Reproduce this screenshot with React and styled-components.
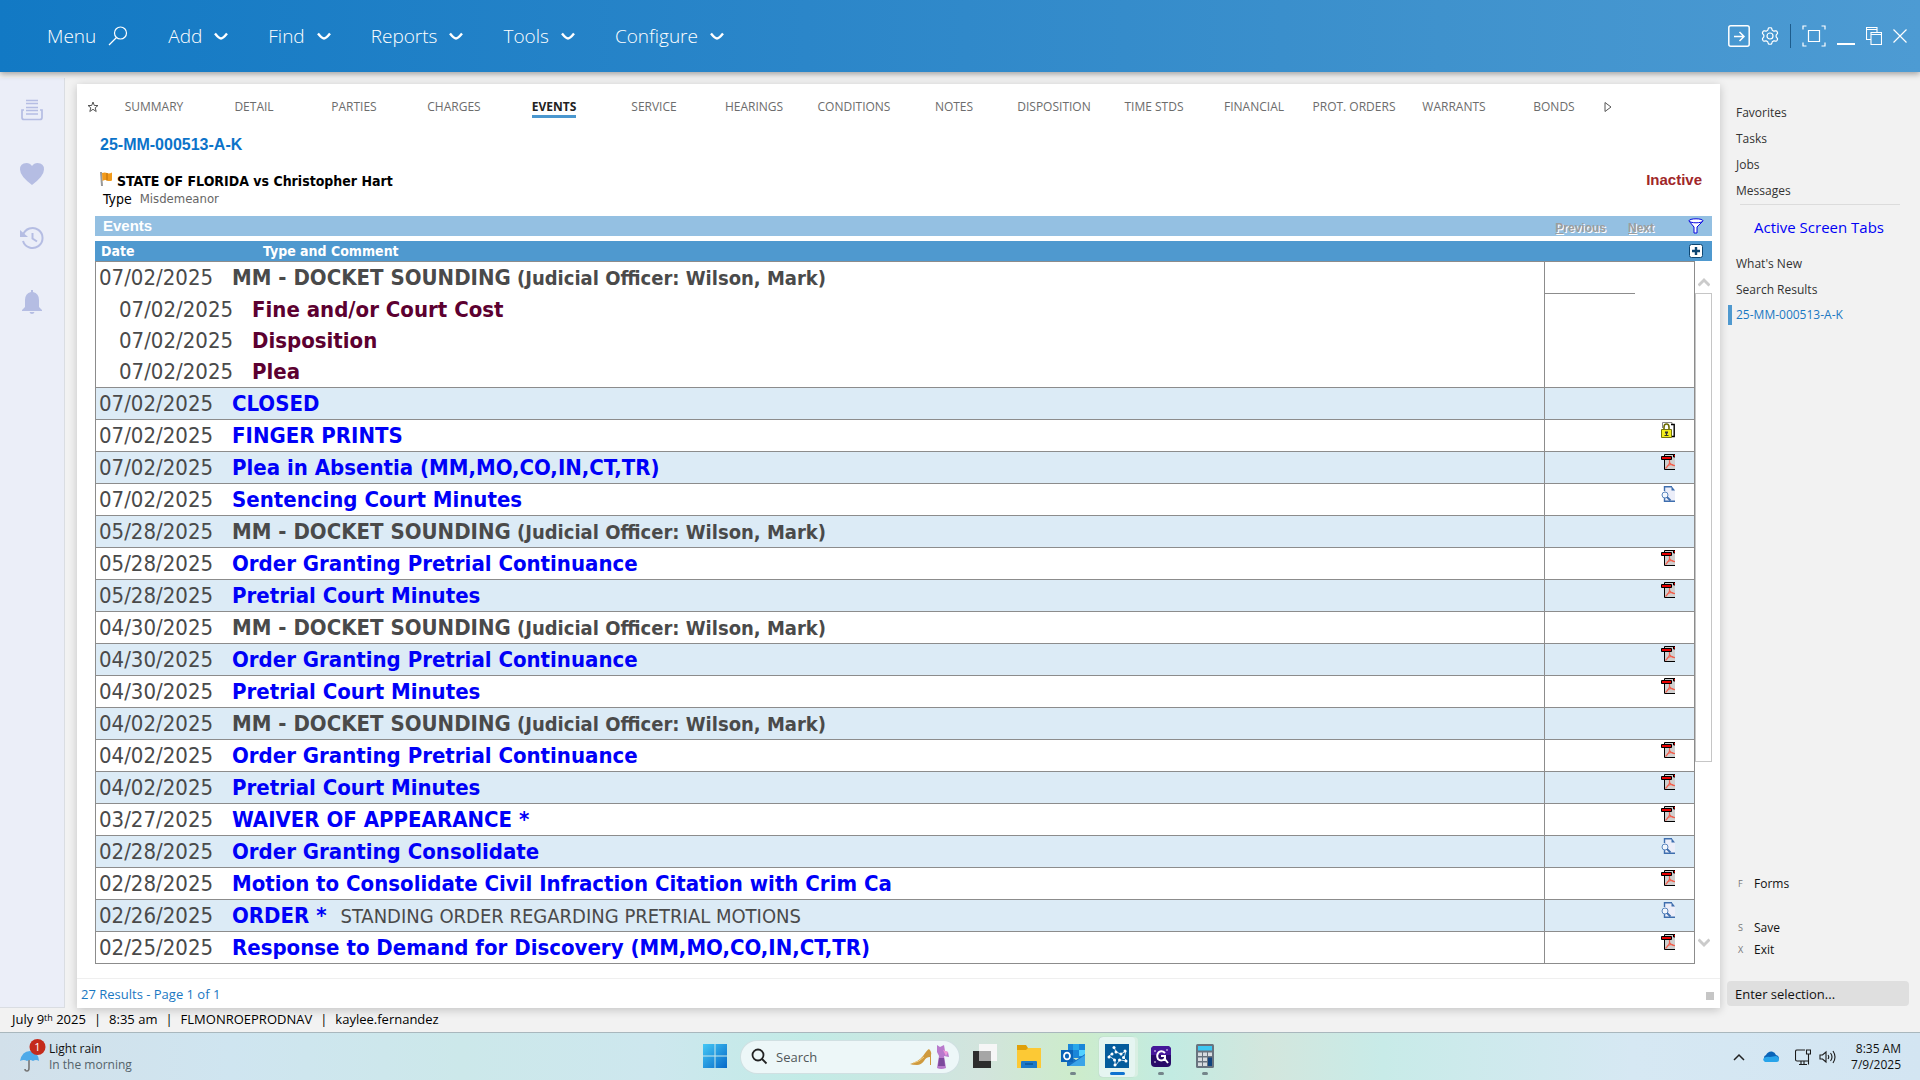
import React from "react";
import styled, { createGlobalStyle, css } from "styled-components";

const ui = `"Open Sans", "Noto Sans", sans-serif`;
const grid = `"DejaVu Sans Condensed", "DejaVu Sans", sans-serif`;
const arial = `"Liberation Sans", Arial, sans-serif`;

const Global = createGlobalStyle`
  * { box-sizing: border-box; }
  html, body, #root { height: 100%; }
  body { margin: 0; background: #f2f2f2; color: #111; font: 12px/16px ${ui}; overflow: hidden; }
  button { border: 0; padding: 0; background: none; color: inherit; font: inherit; cursor: pointer; }
  a { color: inherit; text-decoration: none; }
  svg { display: block; flex: none; }
`;

const Page = styled.div`
  height: 100vh;
  display: flex;
  flex-direction: column;
`;

const Header = styled.header`
  height: 72px;
  flex: none;
  display: flex;
  align-items: center;
  justify-content: space-between;
  padding: 0 13px 0 47px;
  color: #fff;
  background: linear-gradient(90deg, #1279c4 0%, #2b86c9 42%, #3f92cd 75%, #4d9bd3 100%);
  box-shadow: 0 2px 6px rgba(0, 0, 0, 0.35);
  z-index: 1;
`;
const Menu = styled.nav`
  display: flex;
  align-items: center;
  gap: 40px;
`;
const MenuButton = styled.button`
  display: flex;
  align-items: center;
  gap: 12px;
  font-size: 19px;
  line-height: 26px;
  font-weight: 300;
`;
const WindowTools = styled.div`
  display: flex;
  align-items: center;
  gap: 11px;
`;
const ToolDivider = styled.span`
  width: 1px;
  height: 24px;
  background: #1d5c8c;
`;

const Body = styled.div`
  flex: 1;
  min-height: 0;
  display: flex;
`;
const Rail = styled.nav`
  width: 65px;
  flex: none;
  margin-top: 6px;
  padding-top: 18px;
  display: flex;
  flex-direction: column;
  align-items: center;
  gap: 36px;
  background: #ebeef8;
  border: solid #dadde2;
  border-width: 0 1px 1px 0;
`;
const RailButton = styled.button`
  width: 28px;
  height: 28px;
  display: grid;
  place-items: center;
  color: #b5bde3;
`;

const Card = styled.main`
  flex: 1;
  min-width: 0;
  margin: 12px 0 0 12px;
  display: flex;
  flex-direction: column;
  background: #fff;
  box-shadow: 0 2px 9px rgba(0, 0, 0, 0.2);
`;
const Tabs = styled.nav`
  display: flex;
  align-items: center;
  height: 46px;
  padding-left: 10px;
`;
const TabIcon = styled.button`
  width: ${(p) => (p.$end ? "12px" : "17px")};
  display: grid;
  justify-content: start;
`;
const TabCell = styled.div`
  flex: 0 1 100px;
  display: flex;
  justify-content: center;
`;
const TabLink = styled.a`
  height: 21px;
  padding-top: 2px;
  color: #6c6c6c;
  font: 12px/16px ${ui};
  white-space: nowrap;
  ${(p) =>
    p.$active &&
    css`
      color: #222;
      font-weight: 700;
      border-bottom: 3px solid #4a97cf;
    `}
`;

const CaseHead = styled.section`
  padding: 6px 18px 0 23px;
`;
const CaseNumber = styled.h1`
  margin: 0;
  font: 700 16px/18px ${arial};
  color: #0b73c9;
`;
const CaseTitle = styled.div`
  display: flex;
  align-items: center;
  gap: 5px;
  margin-top: 16px;
  font: 700 14px/18px ${grid};
  color: #000;
`;
const CaseName = styled.span`
  flex: 1;
  padding-top: 2px;
`;
const CaseStatus = styled.span`
  font: 700 15px/18px ${arial};
  color: #a02729;
`;
const CaseType = styled.div`
  display: flex;
  gap: 8px;
  padding-left: 3px;
  font: 14px/18px ${grid};
  color: #000;
`;
const TypeValue = styled.span`
  font-size: 13px;
  color: #666;
`;

const Panel = styled.section`
  margin: 8px 8px 0 18px;
`;
const PanelBar = styled.div`
  height: 20px;
  display: flex;
  align-items: center;
  padding: 0 8px;
  background: #94c0e2;
  color: #fff;
`;
const PanelTitle = styled.h2`
  flex: 1;
  margin: 0;
  font: 700 15px/18px ${arial};
`;
const PageButton = styled.button`
  margin-right: 22px;
  padding-top: 3px;
  font: 700 12px/16px ${arial};
  color: #9d9d9d;
  text-shadow: 1px 1px 0 #fff;
`;
const FilterButton = styled.button`
  margin-left: 12px;
`;

const Scroller = styled.div`
  margin-top: 5px;
  display: grid;
  grid-template-columns: 1fr 17px;
`;
const Table = styled.table`
  width: 100%;
  border-collapse: separate;
  border-spacing: 0;
  table-layout: fixed;
`;
const DateHead = styled.th`
  width: 134px;
  height: 21px;
  padding: 0 6px;
  border-bottom: 1px solid #8c8c8c;
  background: #4f99cf;
  color: #fff;
  text-align: left;
  font: 700 14px/18px ${grid};
`;
const TypeHead = styled(DateHead)`
  width: auto;
  padding-left: 34px;
`;
const ToolHead = styled(DateHead)`
  width: 151px;
`;
const HeadCorner = styled.div`
  height: 20px;
  display: grid;
  place-items: center start;
  background: #4f99cf;
`;
const AddButton = styled.button`
  margin-left: -6px;
`;
const Row = styled.tr`
  background: ${(p) => (p.$shade ? "#dcebf6" : "#fff")};
`;
const Cell = styled.td`
  height: 32px;
  padding: 1px 3px 0;
  vertical-align: top;
  border-bottom: 1px solid #8c8c8c;
  font: 22px/30px ${grid};
  color: #4a4a4a;
  white-space: nowrap;
`;
const DateCell = styled(Cell)`
  border-left: 1px solid #8c8c8c;
`;
const DocCell = styled(Cell)`
  border: solid #8c8c8c;
  border-width: 0 1px 1px 1px;
  padding: 2px 19px 0 0;
`;
const DocButton = styled.button`
  display: block;
  margin-left: auto;
`;
const Line = styled.div`
  height: ${(p) => (p.$tall ? "31px" : "30px")};
  line-height: 30px;
`;
const SubLine = styled(Line)`
  height: 31px;
  padding-left: 20px;
  line-height: 32px;
`;
const EventLink = styled.a`
  font-weight: 700;
  color: ${(p) => p.$color};
`;
const Comment = styled.span`
  margin-left: 14px;
  font-size: 20px;
`;
const Officer = styled.span`
  font-size: 20px;
`;
const EmptyNote = styled.div`
  width: 90px;
  height: 30px;
  border-bottom: 1px solid #8c8c8c;
`;

const ScrollColumn = styled.div`
  display: flex;
  flex-direction: column;
`;
const ScrollTrack = styled.div`
  flex: 1;
  display: flex;
  flex-direction: column;
`;
const ScrollButton = styled.button`
  height: 32px;
  width: 17px;
  display: grid;
  place-items: center;
  padding-top: ${(p) => (p.$up ? "10px" : "0")};
  padding-bottom: ${(p) => (p.$up ? "0" : "10px")};
`;
const Thumb = styled.div`
  width: 17px;
  flex: 11;
  border: 1px solid #c6c6c6;
  background: #fff;
`;
const Spacer = styled.div`
  flex: 4;
`;

const CardFoot = styled.footer`
  margin-top: auto;
  height: 30px;
  display: flex;
  align-items: center;
  justify-content: space-between;
  padding: 0 6px 0 4px;
  border-top: 1px solid #efefef;
  font-size: 13px;
  line-height: 18px;
  color: #1a78c2;
`;
const Grip = styled.span`
  width: 8px;
  height: 8px;
  margin-top: 4px;
  background: #c6c6c6;
`;

const Side = styled.aside`
  width: 200px;
  flex: none;
  display: flex;
  flex-direction: column;
  padding: 28px 11px 2px 8px;
`;
const SideLink = styled.a`
  height: 26px;
  display: flex;
  align-items: center;
  padding-left: 4px;
  border-left: 4px solid ${(p) => (p.$active ? "#4f99cf" : "transparent")};
  color: ${(p) => (p.$active ? "#1a78c2" : "#333")};
  line-height: 18px;
`;
const ActiveLink = styled(SideLink)`
  height: 20px;
  margin-top: 2px;
`;
const SideRule = styled.hr`
  width: 160px;
  margin: 0 0 10px 12px;
  border: 0;
  border-top: 1px solid #dcdcdc;
`;
const SideTitle = styled.h2`
  margin: 0 0 12px 26px;
  font: 400 15px/24px ${ui};
  color: #0000f5;
`;
const Actions = styled.div`
  margin-top: auto;
  display: flex;
  flex-direction: column;
`;
const Action = styled.button`
  height: 22px;
  display: flex;
  align-items: center;
  padding-left: 10px;
  margin-bottom: ${(p) => (p.$apart ? "22px" : "0")};
  color: #111;
`;
const ActionKey = styled.span`
  width: 16px;
  text-align: left;
  font-size: 9px;
  color: #777;
`;
const Selection = styled.input`
  width: 182px;
  height: 25px;
  margin: 20px 0 0 -1px;
  padding: 0 8px;
  border: 0;
  border-radius: 4px;
  background: #dfdfdf;
  font: 13px/18px ${ui};
  &::placeholder { color: #111; opacity: 1; }
`;

const Status = styled.footer`
  height: 24px;
  flex: none;
  display: flex;
  align-items: center;
  padding: 0 12px 2px;
  font-size: 13px;
  line-height: 18px;
  color: #000;
`;
const StatusItem = styled.span`
  & + &::before { content: "|"; margin: 0 8px; }
  sup { font-size: 9px; line-height: 0; vertical-align: 3px; }
`;

const Taskbar = styled.footer`
  height: 48px;
  flex: none;
  display: grid;
  grid-template-columns: 1fr auto 1fr;
  align-items: center;
  border-top: 1px solid #a9b7bd;
  background: linear-gradient(90deg, #d2e0ea 0%, #cfe5f0 12%, #cce8ea 24%, #cde7ee 34%, #c2ebe6 42%, #d2e4dd 51%, #cdeccb 56%, #c2ebe2 61%, #d3e6dd 66%, #c8ebe8 72%, #d6e8f3 85%, #d3e5f2 100%);
`;
const Weather = styled.button`
  display: flex;
  align-items: center;
  gap: 1px;
  padding-left: 19px;
  text-align: left;
`;
const WeatherText = styled.span`
  color: ${(p) => (p.$dim ? "#54626a" : "#111")};
  display: block;
`;
const Apps = styled.div`
  display: flex;
  align-items: center;
  gap: 4px;
`;
const AppButton = styled.button`
  width: 40px;
  height: 44px;
  display: flex;
  flex-direction: column;
  align-items: center;
  padding-top: 9px;
  gap: 4px;
  border-radius: 4px;
  ${(p) =>
    p.$active &&
    css`
      height: 40px;
      padding-top: 7px;
      margin: 0 2px;
      width: 36px;
      background: #e5f5f1;
      box-shadow: 3px 0 0 #d9efe3, 0 0 1px #9ab;
    `}
`;
const RunMark = styled.span`
  width: ${(p) => (p.$active ? "15px" : "6px")};
  height: 3px;
  border-radius: 2px;
  background: ${(p) => (p.$active ? "#0f73d0" : "#74858a")};
`;
const Search = styled.label`
  width: 218px;
  height: 32px;
  margin: 0 2px;
  display: flex;
  align-items: center;
  padding: 0 10px;
  gap: 8px;
  border-radius: 16px;
  background: #edf7f8;
  box-shadow: 0 0 0 1px #d0e0e2;
`;
const SearchInput = styled.input`
  flex: 1;
  min-width: 0;
  border: 0;
  padding: 0;
  background: none;
  outline: 0;
  font: 13px/20px ${ui};
  &::placeholder { color: #51585a; opacity: 1; }
`;
const Tray = styled.div`
  display: flex;
  align-items: center;
  justify-content: flex-end;
  padding-right: 19px;
`;
const TrayButton = styled.button`
  margin-right: ${(p) => p.$gap};
`;
const Clock = styled.time`
  text-align: right;
  white-space: pre-line;
`;

/* ---- drawings ---- */
const Lens = () => (
  <svg width="20" height="20" viewBox="0 0 20 20" fill="none" stroke="#fff" strokeWidth="1.2">
    <circle cx="12.5" cy="7" r="6" /><path d="M8.500 11.500 1 19" />
  </svg>
);
const Chevron = () => (
  <svg width="14" height="9" viewBox="0 0 14 9" fill="none" stroke="#fff" strokeWidth="2.4"><path d="M1 1.500 Q5 6.500 7 6.500T13 1.500" /></svg>
);
const EnterIcon = () => (
  <svg width="22" height="22" viewBox="0 0 22 22" fill="none" stroke="#fff" strokeWidth="1.5"><rect x=".8" y=".8" width="20.4" height="20.4" rx="2" /><path d="M6 11.500h10M11.500 7l4.500 4.500-4.500 4.500" /></svg>
);
const gearPath = Array.from({ length: 96 }, (_, i) => {
  const a = (i / 96) * Math.PI * 2;
  const r = 7.2 + 1.1 * Math.tanh(2 * Math.cos(6 * a + Math.PI));
  return `${i ? "L" : "M"}${(9 + r * Math.cos(a)).toFixed(2)} ${(9 + r * Math.sin(a)).toFixed(2)}`;
}).join("") + "Z";
const Gear = () => (
  <svg width="18" height="18" viewBox="0 0 18 18" fill="none" stroke="#fff" strokeWidth="1.2"><path d={gearPath} /><circle cx="9" cy="9" r="3" /></svg>
);
const FitIcon = () => (
  <svg width="24" height="22" viewBox="0 0 24 22" fill="none" stroke="#fff" strokeWidth="1.2"><path d="M1 4.500V1h3.500M19.500 1H23v3.500M23 17.500V21h-3.500M4.500 21H1v-3.500M6.500 5.500h11v11h-11z" /></svg>
);
const MinIcon = () => (
  <svg width="18" height="18" viewBox="0 0 18 18"><path d="M0 16h18v2H0z" fill="#fff" /></svg>
);
const RestoreIcon = () => (
  <svg width="16" height="18" viewBox="0 0 16 18" fill="none" stroke="#fff" strokeWidth="1.1"><path d="M5 12.500H.5V.5h10.500v4.500M.5 2.500h10.500M5 5.500h10.500v12H5zM5 7.500h10.500" /></svg>
);
const CloseIcon = () => (
  <svg width="14" height="14" viewBox="0 0 14 14" stroke="#fff" strokeWidth="1.2"><path d="M.5.5l13 13M13.500.5l-13 13" /></svg>
);

const PressIcon = () => (
  <svg width="22" height="22" viewBox="0 0 22 22" fill="none" stroke="currentColor" strokeWidth="2"><path d="M5 1.500h12M5 4.500h12M5 8.500h12M5 11.500h12M5 15h12" strokeWidth="1.700" /><path d="M3 11H1v7.500q0 2 2 2h16q2 0 2-2V11h-2" strokeWidth="1.700" /></svg>
);
const HeartIcon = () => (
  <svg width="24" height="22" viewBox="0 0 24 22"><path d="M12 22Q0 13 0 6.500 0 0 6.500 0 10 0 12 3 14 0 17.500 0 24 0 24 6.500 24 13 12 22z" fill="currentColor" /></svg>
);
const HistoryIcon = () => (
  <svg width="24" height="24" viewBox="0 0 24 24" fill="none" stroke="currentColor" strokeWidth="2"><path d="M3 15a10 10 0 1 0 0-6M12.500 7v5.500l4.500 3" /><path d="M0 4v7h8z" fill="currentColor" stroke="none" /></svg>
);
const BellIcon = () => (
  <svg width="20" height="24" viewBox="0 0 20 24"><path d="M9 0h2v2q6 1.500 6 8v7l3 3v1H0v-1l3-3v-7q0-6.500 6-8zM7.500 22h5q-.5 2-2.500 2t-2.500-2z" fill="currentColor" /></svg>
);
const StarIcon = () => (
  <svg width="12" height="12" viewBox="0 0 12 12" fill="none" stroke="#555"><path d="M6 1l1.300 3.500H11L8.200 6.800l1 3.700L6 8.300 2.800 10.500l1-3.700L1 4.500h3.700z" /></svg>
);
const NextIcon = () => (
  <svg width="8" height="12" viewBox="0 0 8 12" fill="none" stroke="#555"><path d="M1 1.500v9L7 6z" /></svg>
);
const FlagIcon = () => (
  <svg width="12" height="16" viewBox="0 0 12 16"><path d="M0 0h2l1 14H1z" fill="#999" /><path d="M2 1q3-1 5 0t5-.5v8q-3 1-5 0t-4.500.5z" fill="#f29a1a" /><path d="M7 1v7.500" stroke="#b86a08" /></svg>
);
const FilterIcon = () => (
  <svg width="16" height="16" viewBox="0 0 16 16"><path d="M1 3l5 6v6h3V9l6-6z" fill="#fff" stroke="#0808e0" /><ellipse cx="8" cy="2.800" rx="7" ry="2" fill="#fff" stroke="#0808e0" /></svg>
);
const PlusIcon = () => (
  <svg width="14" height="14" viewBox="0 0 14 14"><rect x=".5" y=".5" width="13" height="13" rx="2" fill="#fff" stroke="#0d4672" /><path d="M7 3v8M3 7h8" stroke="#0d4672" strokeWidth="2.400" /></svg>
);
const ScrollArrow = ({ up }) => (
  <svg width="12" height="10" viewBox="0 0 12 10" fill="none" stroke="#cbcbcb" strokeWidth="3"><path d={up ? "M.5 8.500 6 3l5.500 5.500" : "M.5 1.500 6 7l5.500-5.500"} /></svg>
);
const PdfIcon = () => (
  <svg width="14" height="16" viewBox="0 0 14 16"><path d="M4 1h10v14H4z" fill="#cfcfcf" /><path d="M3.500 2V.5H14M3.500 5v10.500H14" stroke="#000" fill="none" /><path d="M.5 2.500h10v3H.5z" fill="#e80000" stroke="#000" /><path d="M12.500.5H15V3h-2.500z" fill="#e80000" stroke="#000" /><path d="M8.500 6v2.500q0 2-4 6M8.500 8.500q2 3.500 6.500 3M6 12q3-1.500 6-1.500" stroke="#f2604e" fill="none" strokeWidth="1.200" /></svg>
);
const ViewIcon = () => (
  <svg width="14" height="16" viewBox="0 0 14 16"><path d="M3 1h8l3 3v11H3z" fill="#eceef9" /><path d="M3.500 5V.8H11M3.500 12v3.200H14" stroke="#3e6eae" strokeWidth="1.400" fill="none" /><path d="M10.500 0l3.500 4.500h-3.500z" fill="#3e6eae" /><circle cx="4" cy="9" r="3" fill="#f2f7fd" stroke="#5c86bd" /><path d="M6 11l3.500 3.500" stroke="#3e6eae" strokeWidth="1.800" /></svg>
);
const LockIcon = () => (
  <svg width="14" height="16" viewBox="0 0 14 16"><path d="M1.500 6V.5H11v14H9" fill="#fff" stroke="#888" /><path d="M10 2.500h3.200v12H10" fill="#fff" stroke="#000" strokeWidth="1.400" /><path d="M3 8V5q0-3 2.500-3T8 5v3" fill="none" stroke="#6a6a00" strokeWidth="1.600" /><path d="M.5 7.500h10v8H.5z" fill="#f3ee1c" stroke="#77770a" /><path d="M4 9.500h3v2H6V13h1.500v1h-4v-1H5v-1.500H4z" fill="#333" /></svg>
);
const docIcons = { pdf: PdfIcon, view: ViewIcon, lock: LockIcon };

const UmbrellaIcon = () => (
  <svg width="29" height="36" viewBox="0 0 29 36"><path d="M10 14v15q0 3-2 3t-2-2" fill="none" stroke="#777" strokeWidth="1.600" /><path d="M1 22Q3 12 11 12t9 10q-3-2-6 0-3-2-6 0-3-2-7 0z" fill="#4faae9" /><circle cx="18.500" cy="8" r="8" fill="#c42b1c" /><text x="18.500" y="12" fontSize="11" textAnchor="middle" fill="#fff">1</text></svg>
);
const WindowsIcon = () => (
  <svg width="24" height="24" viewBox="0 0 24 24"><defs><linearGradient id="win" gradientUnits="userSpaceOnUse" x1="0" y1="0" x2="24" y2="24"><stop offset="0" stopColor="#45c8f5" /><stop offset="1" stopColor="#0669c9" /></linearGradient></defs><path d="M0 0h11.500v11.500H0zM12.500 0H24v11.500H12.500zM0 12.500h11.500V24H0zM12.500 12.500H24V24H12.500z" fill="url(#win)" /></svg>
);
const SearchLens = () => (
  <svg width="17" height="17" viewBox="0 0 17 17" fill="none" stroke="#222" strokeWidth="1.800"><circle cx="7" cy="7" r="5.500" /><path d="m11 11 4.500 4.500" /></svg>
);
const FashionIcon = () => (
  <svg width="40" height="26" viewBox="0 0 40 26"><path d="M1 20q8-2 13-8 4-6 6-7 3 3 2 6v10h-1v-8q-4 0-6 4-3 4-7 4-5 0-7-1z" fill="#cf9a3e" /><path d="M4 19q6-1 11-6" stroke="#f0cd84" fill="none" /><path d="M28 1l3 2 4-2 1 6 3 1 1 5-5-1 2 12q-5 2-9 0l2-12-2-4z" fill="#b879cc" /><path d="M30 14h5l1 8h-7z" fill="#7c4a9c" /><path d="M34 6l5 2-2 4z" fill="#f09ad8" /></svg>
);
const TaskViewIcon = () => (
  <svg width="24" height="24" viewBox="0 0 24 24"><path d="M6 0h18v17H6z" fill="#f6f6f6" /><path d="M0 7h18v17H0z" fill="#2d2d2d" /><path d="M6 7h12v10H6z" fill="#a6a6a6" /></svg>
);
const FolderIcon = () => (
  <svg width="24" height="24" viewBox="0 0 24 24"><path d="M0 1h9l2 3h13v8H0z" fill="#e0a008" /><path d="M0 6h9l2-2h13v20H0z" fill="#fcc935" /><path d="M4 24v-6q0-1 1-1h14q1 0 1 1v6z" fill="#1d78c8" /><path d="M8 20h8" stroke="#0c5597" strokeWidth="1.500" /></svg>
);
const OutlookIcon = () => (
  <svg width="24" height="24" viewBox="0 0 24 24"><path d="M7 0h17v14H7z" fill="#1a86d9" /><path d="M12 0h6v6h-6z" fill="#28a8ea" /><path d="M18 6h6v6h-6z" fill="#50d0ff" /><path d="M6 22V10l9 6 9-6v12z" fill="#1670c4" /><path d="M24 11v11H8z" fill="#3aa4e8" /><path d="M0 6h12v12H0z" fill="#0a64b8" /><ellipse cx="6" cy="12" rx="3" ry="3.400" fill="none" stroke="#fff" strokeWidth="1.800" /></svg>
);
const OdysseyIcon = () => (
  <svg width="24" height="24" viewBox="0 0 24 24"><path d="M0 0h24v24H0z" fill="#045c9c" /><path d="M9 3l2 5 5 2 5-3-2 7 3 3-7-1-5 6 0-6-6-4 4-3" fill="none" stroke="#fff" strokeWidth=".8" /><g fill="#fff"><circle cx="9" cy="3.500" r="1.500" /><circle cx="11" cy="8" r="1.500" /><circle cx="16" cy="10" r="1.500" /><circle cx="20" cy="7" r="1.500" /><circle cx="18.500" cy="13.500" r="1.500" /><circle cx="21" cy="17" r="1.500" /><circle cx="14.500" cy="16" r="1.500" /><circle cx="10" cy="21" r="1.500" /><circle cx="9.500" cy="16" r="1.500" /><circle cx="4" cy="13" r="1.500" /><circle cx="7" cy="10" r="1.500" /></g></svg>
);
const QIcon = () => (
  <svg width="20" height="24" viewBox="0 0 20 24"><rect y="2" width="20" height="21" rx="4" fill="#280a68" /><path d="M0 6q0-4 4-4h12q4 0 4 4v5H0z" fill="#45179a" /><path d="M14 9q-3-3-6-1-3 3-1 7 3 3 7 0v-3h-4M13 14l4 5" fill="none" stroke="#fff" strokeWidth="2" /><g fill="#fff"><circle cx="4" cy="7" r=".8" /><circle cx="16" cy="6" r=".8" /><circle cx="4" cy="18" r=".8" /></g></svg>
);
const CalcIcon = () => (
  <svg width="18" height="24" viewBox="0 0 18 24"><rect width="18" height="24" rx="1.500" fill="#68737e" /><path d="M2 2h14v4.500H2z" fill="#3cc7f2" /><path d="M2 8.500h4V12H2zM7 8.500h4V12H7zM12 8.500h4V12h-4zM2 13.500h4V17H2zM7 13.500h4V17H7zM2 18.500h4V22H2zM7 18.500h4V22H7z" fill="#d6dbdf" /><path d="M12 13.500h4V22h-4z" fill="#11437e" /></svg>
);
const UpIcon = () => (
  <svg width="12" height="8" viewBox="0 0 12 8" fill="none" stroke="#222" strokeWidth="1.500"><path d="M1 7l5-5 5 5" /></svg>
);
const CloudIcon = () => (
  <svg width="16" height="12" viewBox="0 0 16 12"><path d="M3 9Q-1 6 3 4q2-4 6-3.500Q12 1 13 4q3 .5 3 4z" fill="#0a64b8" /><path d="M2 11Q-1 9 1 7q3-2 6-1l6-1q3 1 3 3.500T13.500 11z" fill="#28a4ea" /></svg>
);
const NetIcon = () => (
  <svg width="16" height="16" viewBox="0 0 16 16" fill="none" stroke="#1a1a1a" strokeWidth="1.100"><path d="M10 1H2Q.5 1 .5 2.500v8Q.5 12 2 12h11M4 15.500h8M6 12v3.500M9 12v3.500M11.500 1h4v4h-4zM13.500 5v10.500" /></svg>
);
const SoundIcon = () => (
  <svg width="17" height="14" viewBox="0 0 17 14" fill="none" stroke="#1a1a1a" strokeWidth="1.100"><path d="M1 5v4h2.500L7 12V2L3.500 5zM9 5q1.500 2 0 4M11.500 3q3 4 0 8M14 1q4 6 0 12" /></svg>
);

/* ---- data ---- */
const tabs = ["SUMMARY", "DETAIL", "PARTIES", "CHARGES", "EVENTS", "SERVICE", "HEARINGS", "CONDITIONS", "NOTES", "DISPOSITION", "TIME STDS", "FINANCIAL", "PROT. ORDERS", "WARRANTS", "BONDS"];
const sounding = { title: "MM - DOCKET SOUNDING", officer: "(Judicial Officer: Wilson, Mark)" };
const granting = { title: "Order Granting Pretrial Continuance", doc: "pdf" };
const minutes = { title: "Pretrial Court Minutes", doc: "pdf" };
const events = [
  { date: "07/02/2025", ...sounding, subs: ["Fine and/or Court Cost", "Disposition", "Plea"] },
  { date: "07/02/2025", title: "CLOSED" },
  { date: "07/02/2025", title: "FINGER PRINTS", doc: "lock" },
  { date: "07/02/2025", title: "Plea in Absentia (MM,MO,CO,IN,CT,TR)", doc: "pdf" },
  { date: "07/02/2025", title: "Sentencing Court Minutes", doc: "view" },
  { date: "05/28/2025", ...sounding },
  { date: "05/28/2025", ...granting },
  { date: "05/28/2025", ...minutes },
  { date: "04/30/2025", ...sounding },
  { date: "04/30/2025", ...granting },
  { date: "04/30/2025", ...minutes },
  { date: "04/02/2025", ...sounding },
  { date: "04/02/2025", ...granting },
  { date: "04/02/2025", ...minutes },
  { date: "03/27/2025", title: "WAIVER OF APPEARANCE *", doc: "pdf" },
  { date: "02/28/2025", title: "Order Granting Consolidate", doc: "view" },
  { date: "02/28/2025", title: "Motion to Consolidate Civil Infraction Citation with Crim Ca", doc: "pdf" },
  { date: "02/26/2025", title: "ORDER *", comment: "STANDING ORDER REGARDING PRETRIAL MOTIONS", doc: "view" },
  { date: "02/25/2025", title: "Response to Demand for Discovery (MM,MO,CO,IN,CT,TR)", doc: "pdf" },
];

function EventRow({ event, shade }) {
  const Doc = docIcons[event.doc];
  const subs = event.subs || [];
  const tall = subs.length > 0;
  return (
    <Row $shade={shade}>
      <DateCell>
        <Line $tall={tall}>{event.date}</Line>
        {subs.map((s) => <SubLine key={s}>{event.date}</SubLine>)}
      </DateCell>
      <Cell>
        <Line $tall={tall}>
          <EventLink href="#" $color={event.officer ? "#4a4a4a" : "#0000f8"}>
            {event.title}{event.officer && <Officer> {event.officer}</Officer>}
          </EventLink>
          {event.comment && <Comment>{event.comment}</Comment>}
        </Line>
        {subs.map((s) => <SubLine key={s}><EventLink href="#" $color="#5c0030">{s}</EventLink></SubLine>)}
      </Cell>
      <DocCell>
        {Doc && <DocButton aria-label="Open document"><Doc /></DocButton>}
        {tall && <EmptyNote />}
      </DocCell>
    </Row>
  );
}

export default function App() {
  return (
    <Page>
      <Global />
      <Header>
        <Menu>
          <MenuButton>Menu <Lens /></MenuButton>
          {["Add", "Find", "Reports", "Tools", "Configure"].map((m) => (
            <MenuButton key={m}>{m} <Chevron /></MenuButton>
          ))}
        </Menu>
        <WindowTools>
          <button aria-label="Go"><EnterIcon /></button>
          <button aria-label="Settings"><Gear /></button>
          <ToolDivider />
          <button aria-label="Full screen"><FitIcon /></button>
          <button aria-label="Minimize"><MinIcon /></button>
          <button aria-label="Restore"><RestoreIcon /></button>
          <button aria-label="Close"><CloseIcon /></button>
        </WindowTools>
      </Header>
      <Body>
        <Rail>
          <RailButton aria-label="Queue"><PressIcon /></RailButton>
          <RailButton aria-label="Favorites"><HeartIcon /></RailButton>
          <RailButton aria-label="History"><HistoryIcon /></RailButton>
          <RailButton aria-label="Alerts"><BellIcon /></RailButton>
        </Rail>
        <Card>
          <Tabs>
            <TabIcon aria-label="Add to favorites"><StarIcon /></TabIcon>
            {tabs.map((t) => (
              <TabCell key={t}><TabLink href="#" $active={t === "EVENTS"}>{t}</TabLink></TabCell>
            ))}
            <TabIcon $end aria-label="More tabs"><NextIcon /></TabIcon>
          </Tabs>
          <CaseHead>
            <CaseNumber>25-MM-000513-A-K</CaseNumber>
            <CaseTitle>
              <FlagIcon />
              <CaseName>STATE OF FLORIDA vs Christopher Hart</CaseName>
              <CaseStatus>Inactive</CaseStatus>
            </CaseTitle>
            <CaseType>Type <TypeValue>Misdemeanor</TypeValue></CaseType>
          </CaseHead>
          <Panel>
            <PanelBar>
              <PanelTitle>Events</PanelTitle>
              <PageButton><u>P</u>revious</PageButton>
              <PageButton><u>N</u>ext</PageButton>
              <FilterButton aria-label="Filter"><FilterIcon /></FilterButton>
            </PanelBar>
            <Scroller>
              <Table>
                <thead>
                  <tr><DateHead>Date</DateHead><TypeHead>Type and Comment</TypeHead><ToolHead aria-label="Documents" /></tr>
                </thead>
                <tbody>
                  {events.map((e, i) => <EventRow key={i} event={e} shade={i % 2 === 1} />)}
                </tbody>
              </Table>
              <ScrollColumn>
                <HeadCorner><AddButton aria-label="Add event"><PlusIcon /></AddButton></HeadCorner>
                <ScrollTrack>
                  <ScrollButton $up aria-label="Scroll up"><ScrollArrow up /></ScrollButton>
                  <Thumb />
                  <Spacer />
                  <ScrollButton aria-label="Scroll down"><ScrollArrow /></ScrollButton>
                </ScrollTrack>
              </ScrollColumn>
            </Scroller>
          </Panel>
          <CardFoot>27 Results - Page 1 of 1<Grip /></CardFoot>
        </Card>
        <Side>
          {["Favorites", "Tasks", "Jobs", "Messages"].map((s) => <SideLink href="#" key={s}>{s}</SideLink>)}
          <SideRule />
          <SideTitle>Active Screen Tabs</SideTitle>
          <SideLink href="#">What's New</SideLink>
          <SideLink href="#">Search Results</SideLink>
          <ActiveLink href="#" $active>25-MM-000513-A-K</ActiveLink>
          <Actions>
            <Action $apart><ActionKey>F</ActionKey>Forms</Action>
            <Action><ActionKey>S</ActionKey>Save</Action>
            <Action><ActionKey>X</ActionKey>Exit</Action>
          </Actions>
          <Selection aria-label="Enter selection" placeholder="Enter selection..." />
        </Side>
      </Body>
      <Status>
        <StatusItem>July 9<sup>th</sup> 2025</StatusItem>
        <StatusItem>8:35 am</StatusItem>
        <StatusItem>FLMONROEPRODNAV</StatusItem>
        <StatusItem>kaylee.fernandez</StatusItem>
      </Status>
      <Taskbar>
        <Weather>
          <UmbrellaIcon />
          <span><WeatherText>Light rain</WeatherText><WeatherText $dim>In the morning</WeatherText></span>
        </Weather>
        <Apps>
          <AppButton aria-label="Start"><WindowsIcon /></AppButton>
          <Search><SearchLens /><SearchInput aria-label="Search" placeholder="Search" /><FashionIcon /></Search>
          <AppButton aria-label="Task view"><TaskViewIcon /></AppButton>
          <AppButton aria-label="Files"><FolderIcon /></AppButton>
          <AppButton aria-label="Outlook"><OutlookIcon /><RunMark /></AppButton>
          <AppButton $active aria-label="Case manager"><OdysseyIcon /><RunMark $active /></AppButton>
          <AppButton aria-label="Q"><QIcon /><RunMark /></AppButton>
          <AppButton aria-label="Calculator"><CalcIcon /><RunMark /></AppButton>
        </Apps>
        <Tray>
          <TrayButton $gap="18px" aria-label="Hidden icons"><UpIcon /></TrayButton>
          <TrayButton $gap="16px" aria-label="Cloud storage"><CloudIcon /></TrayButton>
          <TrayButton $gap="8px" aria-label="Network"><NetIcon /></TrayButton>
          <TrayButton $gap="15px" aria-label="Volume"><SoundIcon /></TrayButton>
          <Clock>{"8:35 AM\n7/9/2025"}</Clock>
        </Tray>
      </Taskbar>
    </Page>
  );
}
